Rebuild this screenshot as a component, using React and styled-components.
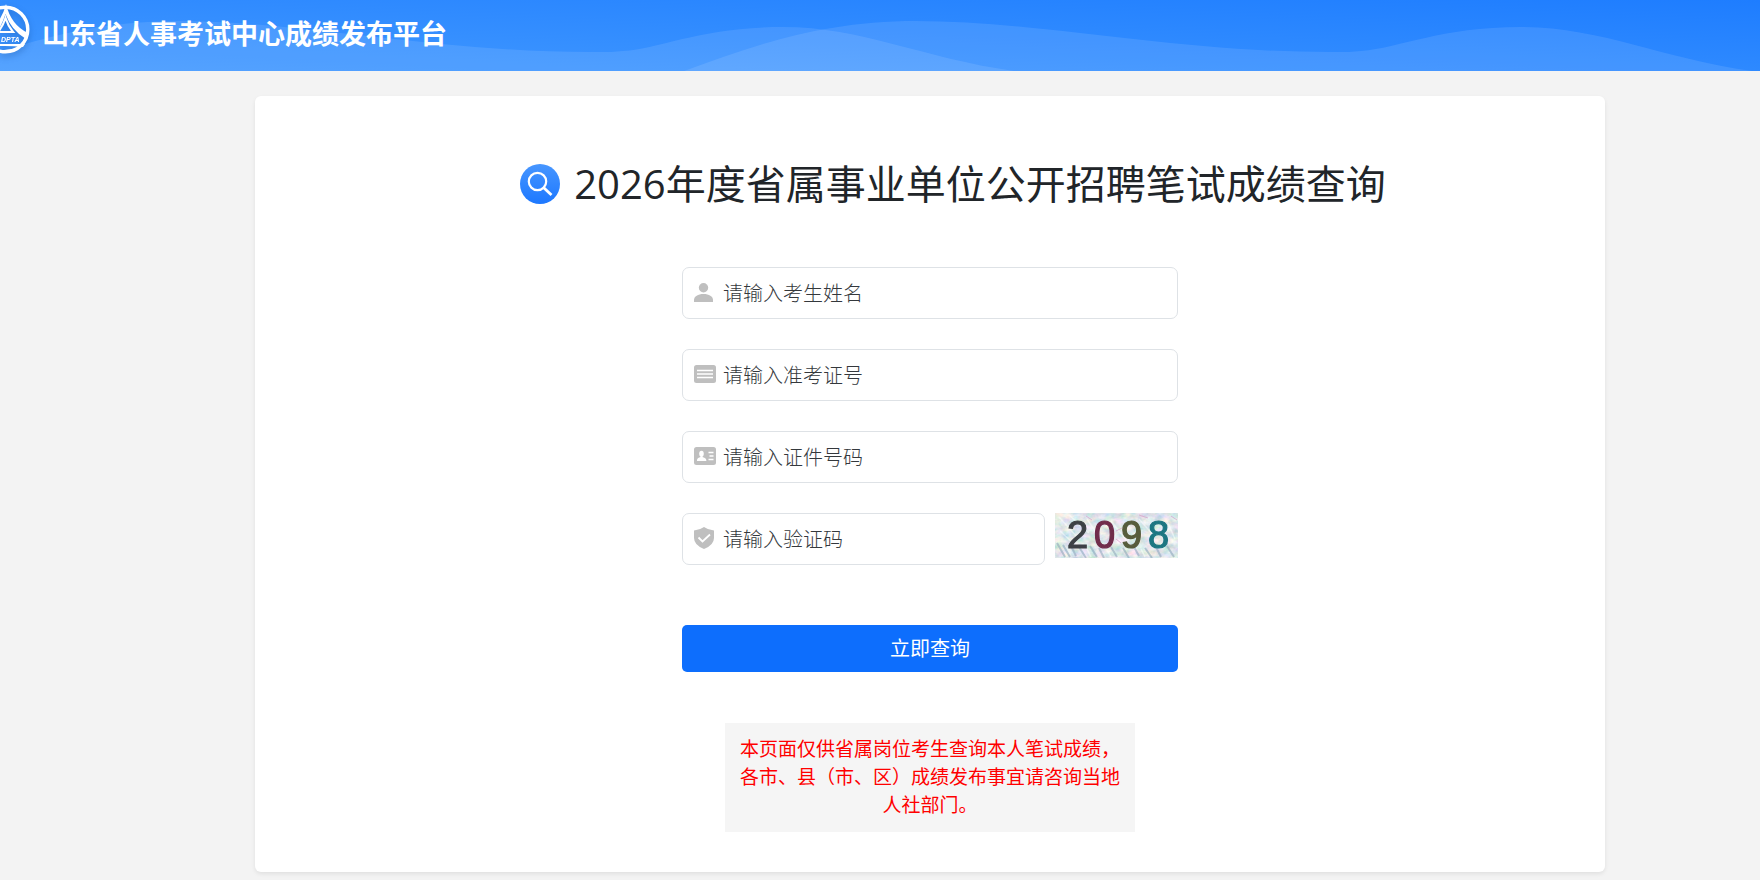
import styled, { createGlobalStyle } from "styled-components";

const GlobalStyle = createGlobalStyle`
  * {
    box-sizing: border-box;
  }
  body {
    margin: 0;
    background: #f3f3f3;
    color: #212529;
    font-family: "Open Sans", "Noto Sans CJK SC", sans-serif;
  }
  h1, h2, p {
    margin: 0;
    font-weight: 400;
  }
`;

const StHeader = styled.header`
  position: relative;
  height: 71px;
  overflow: hidden;
  background: linear-gradient(183deg, #1e7dff 0%, #4299ff 100%);
`;

const HeaderWave = styled.svg`
  position: absolute;
  inset: 0;
  width: 100%;
  height: 100%;
`;

const HeaderBrand = styled.div`
  position: relative;
  height: 66px;
  display: flex;
  align-items: center;
  gap: 12px;
`;

const HeaderLogo = styled.svg`
  flex: none;
  width: 30px;
  height: 66px;
  filter: drop-shadow(0 3px 3px rgba(0, 50, 120, 0.3));
`;

const HeaderTitle = styled.h1`
  color: #fff;
  font-family: "Noto Sans CJK SC", sans-serif;
  font-size: 27px;
  font-weight: 700;
  line-height: 40px;
  white-space: nowrap;
`;

const Page = styled.div`
  padding: 25px 155px 8px 255px;
`;

const Card = styled.main`
  padding: 64px 0 40px;
  border-radius: 6px;
  background: #fff;
  box-shadow: 0 2px 4px rgba(0, 0, 0, 0.08);
  display: flex;
  flex-direction: column;
  align-items: center;
`;

const CardTitle = styled.div`
  display: flex;
  align-items: center;
  gap: 14px;
  padding-left: 46px;
  svg {
    width: 40px;
    height: 40px;
  }
  h2 {
    font-size: 40px;
    line-height: 48px;
    white-space: nowrap;
  }
`;

const Form = styled.form`
  width: 496px;
  margin-top: 59px;
  display: flex;
  flex-direction: column;
  gap: 30px;
`;

const Field = styled.label`
  flex: 1;
  height: 52px;
  padding: 0 11px 2px;
  border: 1px solid #dee2e6;
  border-radius: 7px;
  display: flex;
  align-items: center;
  svg {
    flex: none;
    width: 22px;
    height: 22px;
    fill: #bfbfbf;
  }
  input {
    flex: 1;
    min-width: 0;
    height: 100%;
    padding: 0 7px;
    border: 0;
    outline: 0;
    background: none;
    color: #212529;
    font-family: "Noto Sans CJK SC", sans-serif;
    font-size: 20px;
    font-weight: 300;
  }
  input::placeholder {
    color: #34383c;
    opacity: 1;
  }
`;

const FieldRow = styled.div`
  display: flex;
  align-items: flex-start;
  gap: 10px;
`;

const CaptchaButton = styled.button`
  width: 123px;
  height: 45px;
  padding: 0;
  border: 0;
  cursor: pointer;
  svg {
    display: block;
    width: 100%;
    height: 100%;
  }
`;

const SubmitButton = styled.button`
  height: 47px;
  margin-top: 30px;
  padding: 0 0 2px;
  border: 0;
  border-radius: 5px;
  background: #0d6efd;
  color: #fff;
  font-family: "Noto Sans CJK SC", sans-serif;
  font-size: 20px;
  line-height: 30px;
  cursor: pointer;
`;

const Notice = styled.p`
  width: 410px;
  margin-top: 51px;
  padding: 11px 15px 14px;
  background: #f5f5f5;
  color: #f00;
  font-family: "Noto Sans CJK SC", sans-serif;
  font-size: 19px;
  line-height: 28px;
  text-align: center;
`;

const wave =
  "M684 71C750 47 820 21 916 21C1040 21 1170 52 1331 52C1348 52 1352 52 1361 51C1400 48 1440 27 1521 27C1600 27 1660 58 1752 71Z";

const Header = () => {
  return (
    <StHeader>
      <HeaderWave viewBox="0 0 1760 71" preserveAspectRatio="none">
        <g fill="#fff" fillOpacity="0.1">
          <path d={wave} />
          <path d={wave} transform="translate(-738 0)" />
        </g>
      </HeaderWave>
      <HeaderBrand>
        <Logo />
        <HeaderTitle>山东省人事考试中心成绩发布平台</HeaderTitle>
      </HeaderBrand>
    </StHeader>
  );
};

const Logo = () => (
  <HeaderLogo viewBox="0 0 30 66">
    <circle cx="5.500" cy="29.500" r="22.300" fill="none" stroke="#fff" strokeWidth="3.400" />
    <path d="M6 4Q2 20 -10 31L-5 34Q1 28 5.500 14Q11 30 26 39L28 33Q11 25 6 4Z" fill="#fff" />
    <path
      d="M5.500 18Q3 26 -2 32H13Q8 26 5.500 18Z"
      fill="none"
      stroke="#fff"
      strokeWidth="2.200"
    />
    <text
      x="1"
      y="42"
      fill="#fff"
      fontFamily="Liberation Sans"
      fontSize="7"
      fontWeight="700"
      fontStyle="italic"
    >
      DPTA
    </text>
    <path d="M-14 44H25L23 47Q14 46 5 46T-14 46Z" fill="#fff" />
    <path d="M-14 50Q5 52 20 47L15 51Q5 54 -8 51Z" fill="#fff" />
  </HeaderLogo>
);

const SearchIcon = () => (
  <svg viewBox="0 0 40 40">
    <defs>
      <linearGradient id="search-bg" x1="0" y1="0" x2="0" y2="1">
        <stop offset="0" stopColor="#4796ff" />
        <stop offset="1" stopColor="#1d78ff" />
      </linearGradient>
    </defs>
    <circle cx="20" cy="20" r="20" fill="url(#search-bg)" />
    <g fill="none" stroke="#fff" strokeWidth="2.200">
      <circle cx="17.500" cy="17.500" r="8.700" />
      <path d="M23.500 23.500L31.500 31" strokeWidth="2.800" />
    </g>
  </svg>
);

const UserIcon = () => (
  <svg viewBox="0 0 22 22">
    <circle cx="9.500" cy="6.700" r="4.700" />
    <path d="M0 21V19C0 15.500 4 13 9.500 13S19 15.500 19 19V21Z" />
  </svg>
);

const TicketIcon = () => (
  <svg viewBox="0 0 22 22">
    <rect y="2" width="22" height="18" rx="2.500" />
    <path d="M3 7.500H19M3 11H19M3 14.500H19" stroke="#fff" strokeWidth="1.300" />
  </svg>
);

const IdCardIcon = () => (
  <svg viewBox="0 0 22 22">
    <rect y="2" width="22" height="18" rx="2.500" />
    <g fill="#fff">
      <ellipse cx="7.500" cy="8.700" rx="2.300" ry="2.900" />
      <path d="M3 16V15C3 13.200 5 12.800 6.500 12V11H8.500V12C10 12.800 12.300 13.200 12.300 15V16Z" />
    </g>
    <path d="M14.500 7.500H19.500M15.500 11H19.500M14.500 14.500H19.500" stroke="#fff" strokeWidth="1.300" />
  </svg>
);

const ShieldIcon = () => (
  <svg viewBox="0 0 22 22">
    <path d="M10 0Q14 3 20 3.500V11Q20 18 10 22Q0 18 0 11V3.500Q6 3 10 0Z" />
    <path d="M4.500 10.500L8.500 14.500L16 7.500" fill="none" stroke="#fff" strokeWidth="1.800" />
  </svg>
);

const digits = [
  { value: "2", x: 12, color: "#3d4145" },
  { value: "0", x: 39, color: "#702d4c" },
  { value: "9", x: 66, color: "#575c3c" },
  { value: "8", x: 93, color: "#1d7782" },
];

const Captcha = () => (
  <svg viewBox="0 0 123 45">
    <defs>
      <filter id="grain" x="0" y="0" width="100%" height="100%">
        <feTurbulence type="fractalNoise" baseFrequency="0.12 0.16" numOctaves="3" seed="8" />
        <feColorMatrix values="0.8 0.1 0 0 0.3  0.2 0.4 0 0 0.5  0.2 0 0.4 0 0.52  0 0 0 0 1" />
      </filter>
      <filter id="soft">
        <feGaussianBlur stdDeviation="0.5" />
      </filter>
    </defs>
    <rect width="123" height="45" filter="url(#grain)" />
    <g filter="url(#soft)" fill="none">
      <path
        d="M2 30L10 44M8 32L15 44M16 33L21 43M24 34L31 45M35 33L42 44M44 35L49 45M56 34L62 44M68 35L74 45M79 34L84 43M90 35L97 45M101 34L106 44M112 33L119 44"
        stroke="#8fa9bc"
        strokeOpacity="0.6"
        strokeWidth="2"
      />
      <path
        d="M4 4L22 24M14 2L34 20M5 18L18 30M32 6L44 24M56 8L72 28M84 6L100 24M112 8L120 26M32 36L36 44M51 35L56 44M86 36L90 44"
        stroke="#fff"
        strokeOpacity="0.5"
        strokeWidth="1.500"
      />
      <path
        d="M31 3L37 7M61 18L69 14M84 2L93 5M116 3L122 7M61 26L66 30"
        stroke="#d59fca"
        strokeOpacity="0.7"
      />
    </g>
    <g fontFamily="Liberation Sans, sans-serif" fontSize="38" filter="url(#soft)">
      {digits.map((item) => (
        <text
          key={item.value}
          x={item.x}
          y="35"
          fill={item.color}
          stroke={item.color}
          strokeWidth="1.200"
        >
          {item.value}
        </text>
      ))}
    </g>
  </svg>
);

const fields = [
  { name: "name", placeholder: "请输入考生姓名", Icon: UserIcon },
  { name: "ticket", placeholder: "请输入准考证号", Icon: TicketIcon },
  { name: "idcard", placeholder: "请输入证件号码", Icon: IdCardIcon },
];

const TextField = ({ name, placeholder, Icon }) => (
  <Field htmlFor={name}>
    <Icon />
    <input id={name} name={name} type="text" placeholder={placeholder} aria-label={placeholder} />
  </Field>
);

const App = () => {
  return (
    <>
      <GlobalStyle />
      <Header />
      <Page>
        <Card>
          <CardTitle>
            <SearchIcon />
            <h2>2026年度省属事业单位公开招聘笔试成绩查询</h2>
          </CardTitle>
          <Form onSubmit={(e) => e.preventDefault()}>
            {fields.map((item) => (
              <FieldRow key={item.name}>
                <TextField {...item} />
              </FieldRow>
            ))}
            <FieldRow>
              <TextField name="captcha" placeholder="请输入验证码" Icon={ShieldIcon} />
              <CaptchaButton type="button" aria-label="换一张验证码">
                <Captcha />
              </CaptchaButton>
            </FieldRow>
            <SubmitButton type="submit">立即查询</SubmitButton>
          </Form>
          <Notice>
            本页面仅供省属岗位考生查询本人笔试成绩，各市、县（市、区）成绩发布事宜请咨询当地人社部门。
          </Notice>
        </Card>
      </Page>
    </>
  );
};

export default App;
